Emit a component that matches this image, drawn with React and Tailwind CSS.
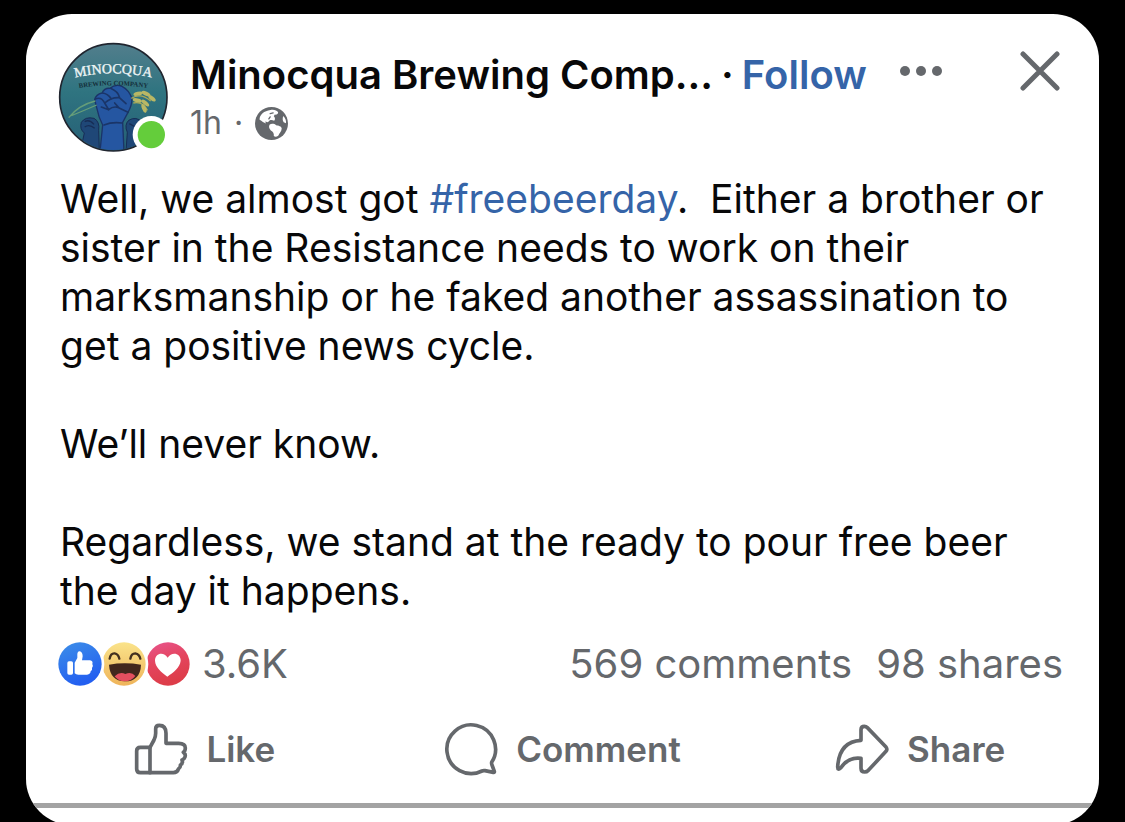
import React from "react";

function Avatar() {
  return (
    <div className="relative h-[110px] w-[110px] shrink-0">
      <svg viewBox="0 0 375 375" className="absolute -left-2 -top-2 h-[125px] w-[125px]" role="img" aria-label="Minocqua Brewing Company">
        <defs>
          <linearGradient id="sky" x1="0" y1="0" x2="0" y2="1">
            <stop offset="0" stopColor="#527e8c" />
            <stop offset="0.45" stopColor="#2f7480" />
            <stop offset="1" stopColor="#255f76" />
          </linearGradient>
          <clipPath id="disc">
            <circle cx="190" cy="187" r="158" />
          </clipPath>
          <path id="nameArc" d="M66 130 Q190 100 314 130" />
          <path id="subArc" d="M74 161 Q190 141 306 161" />
        </defs>
        <circle cx="190" cy="187" r="161" fill="url(#sky)" stroke="#20252f" strokeWidth="5" />
        <g clipPath="url(#disc)">
          <path d="M92 345 L103 294 Q88 282 94 262 Q106 244 132 250 Q150 260 146 286 L148 350Z" fill="#1f4777" stroke="#172d55" strokeWidth="3" />
          <path d="M228 350 L232 292 Q222 270 236 256 Q258 242 278 262 L284 350Z" fill="#1f4777" stroke="#172d55" strokeWidth="3" />
          <path d="M104 260 Q118 252 132 268 M104 276 Q118 266 134 280 M238 266 L256 276" fill="none" stroke="#172d55" strokeWidth="4" />
          <path d="M150 350 L158 270 Q146 248 140 218 L134 194 Q138 178 156 174 Q164 158 180 160 Q196 146 216 154 Q236 164 246 190 Q246 212 234 232 L218 262 L222 350Z" fill="#2556a1" stroke="#1b3468" strokeWidth="4" />
          <path d="M136 192 Q154 184 164 204 M158 174 Q174 176 184 192 M182 160 Q204 170 208 186 M164 204 Q184 186 208 188 L228 206 M164 204 L176 224 Q190 212 206 218 L234 232 M176 224 L154 216 M206 218 L194 204 M162 270 Q186 260 216 264" fill="none" stroke="#1a3568" strokeWidth="5" strokeLinecap="round" />
          <path d="M56 248 Q86 210 136 198 M64 242 Q94 230 140 210" fill="none" stroke="#659d79" strokeWidth="4" />
          <path d="M244 190 Q272 172 302 198 M250 204 Q278 198 292 226" fill="none" stroke="#a9a957" strokeWidth="4" />
          <g fill="#b8b765">
            <ellipse cx="264" cy="176" rx="14" ry="6" transform="rotate(-12 264 176)" />
            <ellipse cx="288" cy="176" rx="14" ry="6" transform="rotate(24 288 176)" />
            <ellipse cx="306" cy="190" rx="13" ry="6" transform="rotate(38 306 190)" />
            <ellipse cx="262" cy="196" rx="14" ry="6" transform="rotate(14 262 196)" />
            <ellipse cx="286" cy="204" rx="14" ry="6" transform="rotate(40 286 204)" />
            <ellipse cx="282" cy="220" rx="14" ry="6" transform="rotate(68 282 220)" />
          </g>
          <text fill="#142f3a" fontSize="20" fontWeight="700" fontFamily="Liberation Serif, serif">
            <textPath href="#subArc" startOffset="50%" textAnchor="middle">BREWING COMPANY</textPath>
          </text>
          <text fill="#eef5f6" stroke="#eef5f6" strokeWidth="1" fontSize="42" fontFamily="Liberation Serif, serif">
            <textPath href="#nameArc" startOffset="50%" textAnchor="middle">MINOCQUA</textPath>
          </text>
        </g>
        <circle cx="304" cy="299" r="56" fill="#fff" />
        <circle cx="304" cy="299" r="41" fill="#64cd3b" />
      </svg>
    </div>
  );
}

function Globe() {
  return (
    <svg viewBox="0 0 100 100" className="h-[33px] w-[33px]" role="img" aria-label="Public">
      <circle cx="50" cy="50" r="50" fill="#65686c" />
      <path
        d="M14 39 C13 24 28 11 47 9 C57 7 67 10 70 16 C71 22 64 24 60 23 L57 28 C61 32 62 38 58 42 C54 40 50 38 45 40 L39 46 L31 44 L33 50 C27 49 21 43 14 39Z"
        fill="#fff"
      />
      <path
        d="M44 54 C50 49 59 51 64 55 C71 56 80 58 81 65 C80 75 74 79 71 86 C66 91 61 92 57 88 C58 80 55 75 48 71 C43 66 41 60 44 54Z"
        fill="#fff"
      />
      <path d="M86 27 C92 33 95 42 94 49 L87 46 C83 41 83 32 86 27Z" fill="#fff" />
      <path d="M46 20 L55 18 M46 30 L42 36" stroke="#65686c" strokeWidth="4" strokeLinecap="round" />
    </svg>
  );
}

function Reactions() {
  return (
    <svg viewBox="0 0 396 132" className="h-[44px] w-[132px]" aria-hidden="true">
      <defs>
        <linearGradient id="blue" x1="0" y1="0" x2="0.4" y2="1">
          <stop offset="0" stopColor="#3d8fe8" />
          <stop offset="1" stopColor="#235ff0" />
        </linearGradient>
        <linearGradient id="yellow" x1="0" y1="0" x2="0" y2="1">
          <stop offset="0" stopColor="#fae38a" />
          <stop offset="1" stopColor="#efb45a" />
        </linearGradient>
        <linearGradient id="red" x1="0" y1="0" x2="0.3" y2="1">
          <stop offset="0" stopColor="#e8558f" />
          <stop offset="0.5" stopColor="#e4455f" />
          <stop offset="1" stopColor="#dd3d49" />
        </linearGradient>
      </defs>
      <circle cx="330" cy="66" r="65" fill="url(#red)" />
      <path d="M328 104 C310 90 292 76 291 56 C291 32 318 28 329 47 C341 28 368 33 368 56 C366 77 346 91 328 104Z" fill="#fff" />
      <circle cx="198" cy="66" r="73" fill="#fff" />
      <circle cx="198" cy="66" r="65" fill="url(#yellow)" />
      <path d="M155 50 Q158 33 170 34 Q181 36 184 50 M217 50 Q220 34 232 34 Q244 36 247 50" fill="none" stroke="#43301f" strokeWidth="7" strokeLinecap="round" />
      <path d="M153 68 Q200 60 249 68 Q247 118 200 118 Q156 116 153 68Z" fill="#42271d" />
      <path d="M170 103 Q186 87 202 96 Q220 87 232 102 Q220 118 200 118 Q181 118 170 103Z" fill="#e44f5f" />
      <circle cx="66" cy="66" r="73" fill="#fff" />
      <circle cx="66" cy="66" r="65" fill="url(#blue)" />
      <rect x="28" y="58" width="17" height="40" rx="5" fill="#fff" />
      <path d="M50 94 V62 L58 48 V35 Q59 27 66 28 Q74 31 74 43 L72 55 H96 Q106 57 103 66 Q107 72 102 78 Q104 85 98 88 Q98 97 87 98 H61 Q54 98 50 94Z" fill="#fff" />
    </svg>
  );
}

const strokeProps = {
  fill: "none",
  stroke: "currentColor",
  strokeWidth: 11,
  strokeLinejoin: "round",
  strokeLinecap: "round",
  className: "h-[54px] w-[54px]",
  "aria-hidden": true,
};

function LikeIcon() {
  return (
    <svg viewBox="74 34 162 162" {...strokeProps}>
      <path d="M122 110 H93 Q82 110 82 121 V175 Q82 186 93 186 H122Z" />
      <path d="M122 110 L134 88 Q139 78 139 68 V54 Q139 44 150 44 Q170 44 170 68 V98 H208 Q228 98 228 112 Q228 121 222 125 Q230 130 227 139 Q225 146 218 148 Q222 158 213 163 Q214 171 208 174 Q204 186 192 186 H122" />
    </svg>
  );
}

function CommentIcon() {
  return (
    <svg viewBox="40 36 162 162" {...strokeProps}>
      <path d="M183 157 A73 73 0 1 0 154 183 Q158 181 163 182 L188 187 Q192 188 191 184 L184 165 Q182 160 183 157Z" />
    </svg>
  );
}

function ShareIcon() {
  return (
    <svg viewBox="74 65 162 162" {...strokeProps}>
      <path d="M152 120 V88 Q152 78 162 78 Q167 78 171 82 L227 140 Q232 147 227 153 L174 210 Q169 215 163 215 Q152 215 152 204 V174 Q114 169 91 203 Q82 211 82 200 Q86 124 152 120Z" />
    </svg>
  );
}

const actions = [
  { label: "Like", Icon: LikeIcon },
  { label: "Comment", Icon: CommentIcon },
  { label: "Share", Icon: ShareIcon },
];

export default function App() {
  return (
    <div className="h-screen overflow-hidden bg-black px-[26px] pt-[14px] font-['Inter',sans-serif]">
      <article className="overflow-hidden rounded-[46px] bg-white pb-[17px] text-[#080809]">
        <header className="flex items-start pl-8 pr-[39px] pt-[29px]">
          <Avatar />
          <div className="ml-[22px] min-w-0 flex-1 pt-2">
            <div className="flex h-12 items-center whitespace-nowrap text-[40px] font-semibold">
              <h1>Minocqua Brewing Comp...</h1>
              <span className="mx-2">·</span>
              <button type="button" className="text-[#3564a8]">Follow</button>
              <button type="button" aria-label="More options" className="mb-2 ml-8 text-[#65686c]">
                <svg viewBox="0 0 44 12" className="h-3 w-11" fill="currentColor">
                  <circle cx="6" cy="6" r="5" />
                  <circle cx="22" cy="6" r="5" />
                  <circle cx="38" cy="6" r="5" />
                </svg>
              </button>
            </div>
            <div className="flex h-12 items-center text-[32px] text-[#65686c]">
              <span>1h</span>
              <span className="mx-3">·</span>
              <Globe />
            </div>
          </div>
          <button type="button" aria-label="Close" className="mt-2 text-[#65686c]">
            <svg viewBox="0 0 40 40" className="h-10 w-10" fill="none" stroke="currentColor" strokeWidth="5" strokeLinecap="round">
              <path d="M3 3 L37 37 M37 3 L3 37" />
            </svg>
          </button>
        </header>

        <div className="px-[34px] pt-[21px] text-[39px] leading-[49px]">
          <p className="whitespace-pre-line">
            Well, we almost got{" "}
            <a href="#freebeerday" className="text-[#3564a8]">#freebeerday</a>.&nbsp; Either a brother or{"\n"}
            sister in the Resistance needs to work on their{"\n"}
            marksmanship or he faked another assassination to{"\n"}
            get a positive news cycle.
          </p>
          <p className="mt-[49px]">We’ll never know.</p>
          <p className="mt-[49px] whitespace-pre-line">
            Regardless, we stand at the ready to pour free beer{"\n"}
            the day it happens.
          </p>
        </div>

        <div className="mt-[25px] flex h-12 items-center pl-8 pr-9 text-[40px] text-[#65686c]">
          <Reactions />
          <span className="ml-3">3.6K</span>
          <span className="ml-auto">569 comments</span>
          <span className="ml-6">98 shares</span>
        </div>

        <div className="mt-[34px] grid grid-cols-3 pb-[27px] text-[35px] font-semibold text-[#65686c]">
          {actions.map(({ label, Icon }) => (
            <button key={label} type="button" className="flex items-center justify-center gap-[18px]">
              <Icon />
              {label}
            </button>
          ))}
        </div>
        <hr className="border-t-[5px] border-[#a3a3a3]" />
      </article>
    </div>
  );
}
